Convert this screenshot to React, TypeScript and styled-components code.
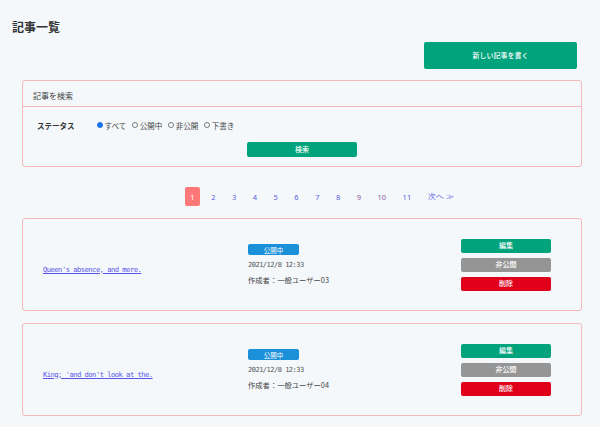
import styled, { createGlobalStyle } from "styled-components";

const GlobalStyle = createGlobalStyle`
	html, body {
		margin: 0;
		padding: 0;
		background-color: #f4f8fb;
	}
	body {
		font-family: "Noto Sans CJK JP", "Noto Sans", sans-serif;
		color: #333;
	}
`;

const Page = styled.div`
	min-height: 427px;
	background-color: #f4f8fb;
`;

const Title = styled.h1`
	margin: 0;
	padding: 19px 0 0 12px;
	font-size: 12px;
	line-height: 16px;
	font-weight: 700;
	color: #333;
`;

const Main = styled.main`
	padding: 0 18px 0 22px;
`;

const Toolbar = styled.div`
	display: flex;
	justify-content: flex-end;
	padding: 7px 5px 0 0;
`;

const Button = styled.button<{ color: string; width: number; height: number }>`
	width: ${(props) => props.width}px;
	height: ${(props) => props.height}px;
	padding: 0;
	border: none;
	border-radius: 2px;
	background-color: ${(props) => props.color};
	color: #fff;
	font-family: "Noto Sans CJK JP", sans-serif;
	font-size: 7px;
	font-weight: 500;
	line-height: 1;
	cursor: pointer;
`;

const Panel = styled.section`
	border: 1px solid #f6b9b9;
	border-radius: 3px;
	background-color: #f4f8fb;
`;

const SearchBox = styled(Panel)`
	margin-top: 11px;
`;

const SearchHeader = styled.div`
	height: 26px;
	box-sizing: border-box;
	padding: 9px 10px 0;
	font-size: 8px;
	line-height: 12px;
	color: #444;
	border-bottom: 1px solid #f6b9b9;
`;

const SearchBody = styled.div`
	padding: 13px 14px 9px;
	display: flex;
	flex-direction: column;
`;

const StatusRow = styled.div`
	display: flex;
	align-items: center;
	height: 10px;
`;

const Label = styled.span`
	width: 60px;
	font-size: 7.5px;
	font-weight: 700;
	color: #333;
`;

const RadioGroup = styled.div`
	display: flex;
	align-items: center;
	gap: 6px;
`;

const RadioLabel = styled.label`
	display: flex;
	align-items: center;
	gap: 1.5px;
	font-size: 7.5px;
	color: #444;
`;

const Radio = styled.input`
	appearance: none;
	margin: 0;
	width: 6px;
	height: 6px;
	border-radius: 50%;
	border: 0.8px solid #777;
	background-color: #fff;
	&:checked {
		border-color: #1a73e8;
		background-color: #1a73e8;
	}
`;

const SearchAction = styled.div`
	display: flex;
	justify-content: center;
	margin-top: 12px;
`;

const Pagination = styled.nav`
	display: flex;
	justify-content: center;
	align-items: center;
	gap: 6.5px;
	margin-top: 20px;
	padding-left: 40px;
	height: 19px;
`;

const PageLink = styled.a<{ active?: boolean; visited?: boolean }>`
	display: flex;
	align-items: center;
	justify-content: center;
	height: 19px;
	padding: 0 5px;
	border-radius: 2px;
	font-family: "Noto Sans", sans-serif;
	font-size: 7.5px;
	text-decoration: none;
	background-color: ${(props) => (props.active ? "#ff7878" : "transparent")};
	color: ${(props) => (props.active ? "#fff" : props.visited ? "#8a5a9e" : "#5b5ce0")};
`;

const Card = styled(Panel)`
	display: grid;
	grid-template-columns: 205px 1fr 90px;
	align-items: center;
	height: 93px;
	box-sizing: border-box;
	margin-top: 12px;
	padding: 0 30px 0 20px;
	& + & {
		margin-top: 12px;
	}
`;

const ArticleLink = styled.a`
	font-family: "DejaVu Sans Mono", monospace;
	font-size: 7.2px;
	letter-spacing: -0.55px;
	color: #5a55e8;
	text-decoration: underline;
`;

const Meta = styled.div`
	display: flex;
	flex-direction: column;
	align-items: flex-start;
`;

const Badge = styled.span`
	display: flex;
	align-items: center;
	justify-content: center;
	width: 51px;
	height: 11px;
	border-radius: 2px;
	background-color: #1a90d8;
	color: #fff;
	font-size: 6.5px;
`;

const Date = styled.span`
	margin-top: 5px;
	font-family: "DejaVu Sans Mono", monospace;
	font-size: 7px;
	letter-spacing: -0.5px;
	line-height: 10px;
	color: #555;
`;

const Author = styled.span`
	margin-top: 5px;
	font-size: 7.3px;
	line-height: 10px;
	color: #444;
`;

const Actions = styled.div`
	display: flex;
	flex-direction: column;
	gap: 5px;
`;

const articles = [
	{ title: "Queen's absence, and mere.", author: "03" },
	{ title: "King; 'and don't look at the.", author: "04" },
];

const pages = ["1", "2", "3", "4", "5", "6", "7", "8", "9", "10", "11"];

export default function App() {
	return (
		<Page>
			<GlobalStyle />
			<Title>記事一覧</Title>
			<Main>
				<Toolbar>
					<Button color="#00a37b" width={153} height={27}>
						新しい記事を書く
					</Button>
				</Toolbar>
				<SearchBox>
					<SearchHeader>記事を検索</SearchHeader>
					<SearchBody>
						<StatusRow>
							<Label>ステータス</Label>
							<RadioGroup>
								{["すべて", "公開中", "非公開", "下書き"].map((s, i) => (
									<RadioLabel key={s}>
										<Radio type="radio" name="status" defaultChecked={i === 0} />
										{s}
									</RadioLabel>
								))}
							</RadioGroup>
						</StatusRow>
						<SearchAction>
							<Button color="#00a37b" width={110} height={15}>
								検索
							</Button>
						</SearchAction>
					</SearchBody>
				</SearchBox>
				<Pagination>
					{pages.map((p) => (
						<PageLink key={p} href="#" active={p === "1"} visited={p === "9" || p === "10"}>
							{p}
						</PageLink>
					))}
					<PageLink href="#">次へ ≫</PageLink>
				</Pagination>
				{articles.map((a) => (
					<Card key={a.author}>
						<div>
							<ArticleLink href="#">{a.title}</ArticleLink>
						</div>
						<Meta>
							<Badge>公開中</Badge>
							<Date>2021/12/8 12:33</Date>
							<Author>作成者：一般ユーザー{a.author}</Author>
						</Meta>
						<Actions>
							<Button color="#00a37b" width={90} height={14}>
								編集
							</Button>
							<Button color="#959595" width={90} height={14}>
								非公開
							</Button>
							<Button color="#e1001c" width={90} height={14}>
								削除
							</Button>
						</Actions>
					</Card>
				))}
			</Main>
		</Page>
	);
}
